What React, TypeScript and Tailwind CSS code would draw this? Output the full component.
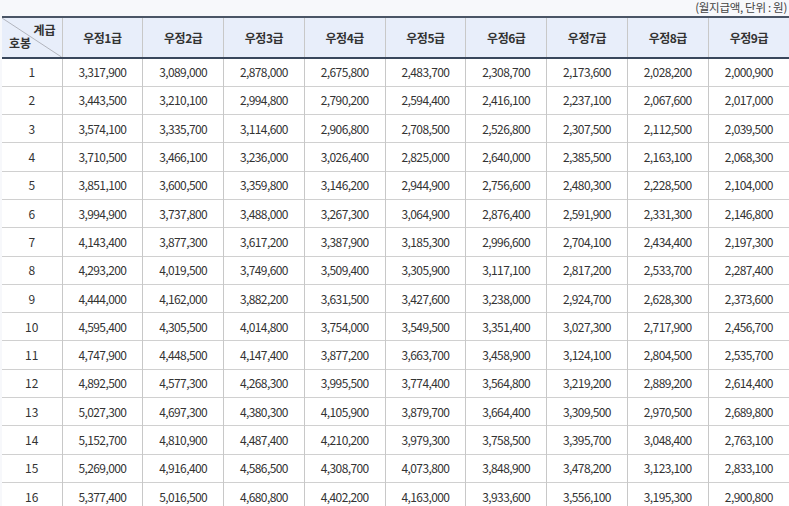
import React from "react";

const rows: string[][] = [
  ["3,317,900","3,089,000","2,878,000","2,675,800","2,483,700","2,308,700","2,173,600","2,028,200","2,000,900"],
  ["3,443,500","3,210,100","2,994,800","2,790,200","2,594,400","2,416,100","2,237,100","2,067,600","2,017,000"],
  ["3,574,100","3,335,700","3,114,600","2,906,800","2,708,500","2,526,800","2,307,500","2,112,500","2,039,500"],
  ["3,710,500","3,466,100","3,236,000","3,026,400","2,825,000","2,640,000","2,385,500","2,163,100","2,068,300"],
  ["3,851,100","3,600,500","3,359,800","3,146,200","2,944,900","2,756,600","2,480,300","2,228,500","2,104,000"],
  ["3,994,900","3,737,800","3,488,000","3,267,300","3,064,900","2,876,400","2,591,900","2,331,300","2,146,800"],
  ["4,143,400","3,877,300","3,617,200","3,387,900","3,185,300","2,996,600","2,704,100","2,434,400","2,197,300"],
  ["4,293,200","4,019,500","3,749,600","3,509,400","3,305,900","3,117,100","2,817,200","2,533,700","2,287,400"],
  ["4,444,000","4,162,000","3,882,200","3,631,500","3,427,600","3,238,000","2,924,700","2,628,300","2,373,600"],
  ["4,595,400","4,305,500","4,014,800","3,754,000","3,549,500","3,351,400","3,027,300","2,717,900","2,456,700"],
  ["4,747,900","4,448,500","4,147,400","3,877,200","3,663,700","3,458,900","3,124,100","2,804,500","2,535,700"],
  ["4,892,500","4,577,300","4,268,300","3,995,500","3,774,400","3,564,800","3,219,200","2,889,200","2,614,400"],
  ["5,027,300","4,697,300","4,380,300","4,105,900","3,879,700","3,664,400","3,309,500","2,970,500","2,689,800"],
  ["5,152,700","4,810,900","4,487,400","4,210,200","3,979,300","3,758,500","3,395,700","3,048,400","2,763,100"],
  ["5,269,000","4,916,400","4,586,500","4,308,700","4,073,800","3,848,900","3,478,200","3,123,100","2,833,100"],
  ["5,377,400","5,016,500","4,680,800","4,402,200","4,163,000","3,933,600","3,556,100","3,195,300","2,900,800"],
];

const font = { fontFamily: '"Noto Sans CJK KR", "Noto Sans", sans-serif' };

export default function App() {
  return (
    <div className="w-[789px] h-[506px] overflow-hidden bg-[#f7f8fb] text-[#333]" style={font}>
      <div className="h-[16px] flex items-center justify-end pr-[2px] text-[11.5px] text-[#444] tracking-[-0.3px]">
        (월지급액, 단위 : 원)
      </div>
      <div className="pl-[2px]">
        <table className="w-[787px] table-fixed border-collapse text-[12px] bg-white">
          <colgroup>
            <col className="w-[60px]" />
            {Array.from({ length: 9 }).map((_, i) => (
              <col key={i} />
            ))}
          </colgroup>
          <thead>
            <tr className="h-[41px] bg-[#e8eefa] border-t-2 border-t-[#4a5566] border-b-2 border-b-[#39475c]">
              <th className="relative p-0 border-r border-r-[#c8c8c8] font-bold">
                <svg className="absolute inset-0 w-full h-full" preserveAspectRatio="none" viewBox="0 0 60 40">
                  <line x1="0" y1="0" x2="60" y2="40" stroke="#b0b4bc" strokeWidth="1" />
                </svg>
                <span className="absolute right-[6px] top-[3px] text-[12px]">계급</span>
                <span className="absolute left-[7px] bottom-[5px] text-[12px]">호봉</span>
              </th>
              {Array.from({ length: 9 }).map((_, i) => (
                <th key={i} className="p-0 font-bold border-r border-r-[#c8c8c8] last:border-r-0 text-[12px] tracking-[-0.5px]">
                  우정{i + 1}급
                </th>
              ))}
            </tr>
          </thead>
          <tbody>
            {rows.map((r, i) => (
              <tr key={i} className="h-[28.3px] border-b border-b-[#d0d0d0]">
                <td className="p-0 text-center border-r border-r-[#c8c8c8]">{i + 1}</td>
                {r.map((v, j) => (
                  <td key={j} className="p-0 text-center border-r border-r-[#c8c8c8] last:border-r-0 tracking-[-0.6px]">
                    {v}
                  </td>
                ))}
              </tr>
            ))}
          </tbody>
        </table>
      </div>
    </div>
  );
}
